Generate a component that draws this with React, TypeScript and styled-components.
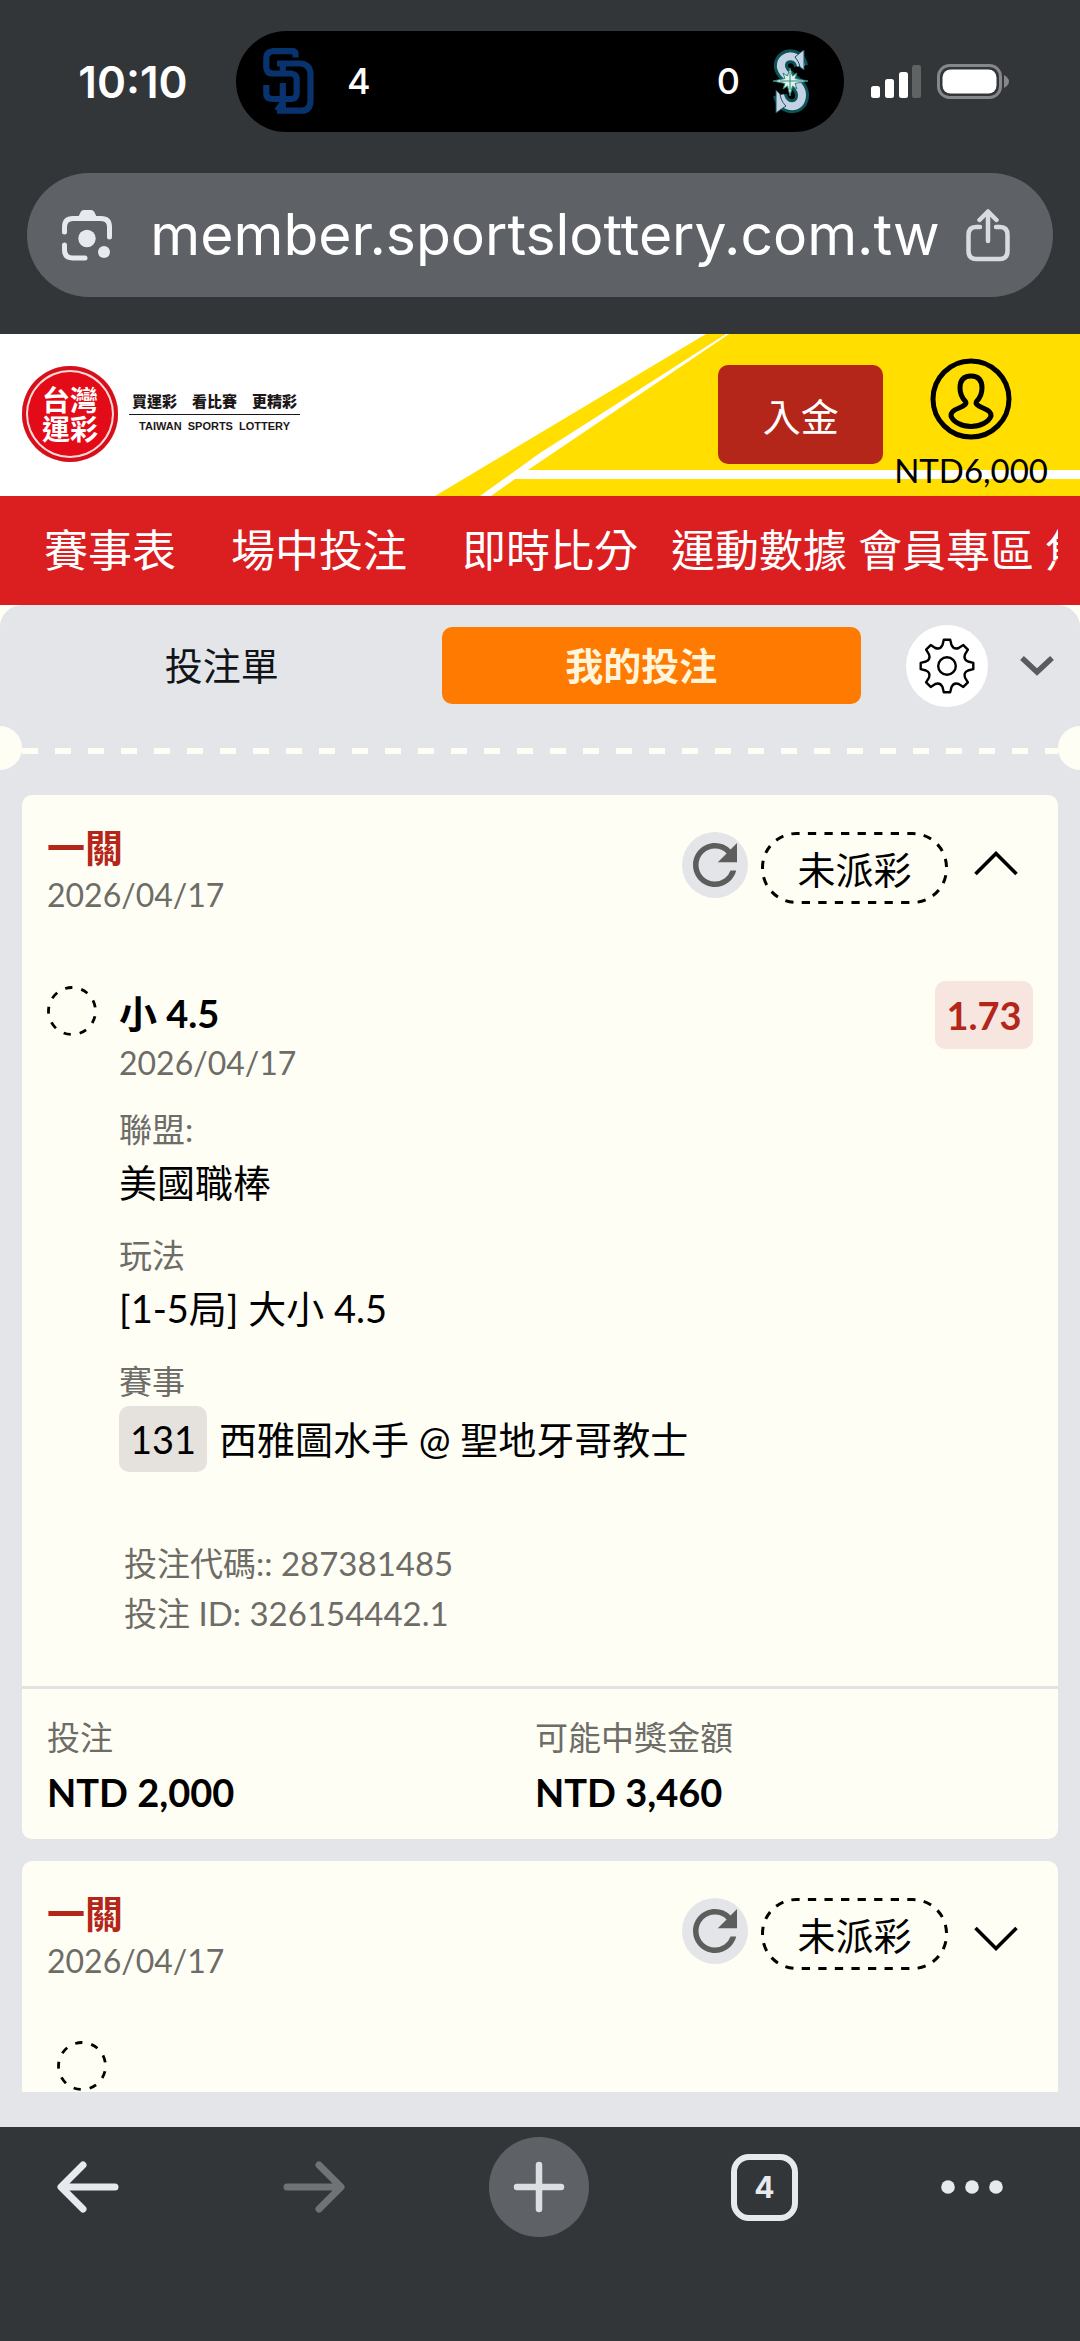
import React, { useState } from 'react';
import styled, { createGlobalStyle } from 'styled-components';
import { MdRefresh } from 'react-icons/md';

const chromeFont = '"Inter", "Roboto", "Liberation Sans", sans-serif';
const siteFont = '"Lato", "Noto Sans CJK TC", "Noto Sans", sans-serif';
const cjkFont = '"Noto Sans CJK TC", "Lato", sans-serif';

const color = {
  chrome: '#333639',
  field: '#5e6266',
  icon: '#e6e9ed',
  red: '#db1e20',
  brick: '#b5261a',
  yellow: '#ffde00',
  orange: '#ff7a00',
  panel: '#e4e5e8',
  cream: '#fffef5',
  muted: '#6d6c67',
};

const GlobalStyle = createGlobalStyle`
  *, *::before, *::after { box-sizing: border-box; }
  body { margin: 0; background: ${color.chrome}; font-family: ${siteFont}; color: #000; }
  button, input { font: inherit; color: inherit; border: 0; padding: 0; background: none; }
  button { cursor: pointer; }
  a { color: inherit; text-decoration: none; }
  svg { display: block; flex: none; }
  p, h1, h2, dl, dd, dt, ul { margin: 0; padding: 0; }
`;

const Shell = styled.div`
  display: flex;
  flex-direction: column;
  height: 100vh;
  overflow: hidden;
`;

/* ---------- browser chrome ---------- */

const BrowserTop = styled.header`
  flex: none;
  padding: 31px 0 37px;
  background: ${color.chrome};
  color: #fff;
  font-family: ${chromeFont};
`;

const StatusBar = styled.div`
  display: grid;
  grid-template-columns: 1fr minmax(0, 608px) 1fr;
  align-items: center;
`;

const Clock = styled.time`
  padding-left: 30px;
  text-align: center;
  font-size: 44px;
  line-height: 52px;
  font-weight: 600;
`;

const Island = styled.div`
  display: flex;
  align-items: center;
  justify-content: space-between;
  height: 101px;
  padding: 0 34px 0 27px;
  border-radius: 51px;
  background: #000;
`;

const TeamScore = styled.div`
  display: flex;
  align-items: center;
  gap: 32px;
  font-size: 36px;
  line-height: 48px;
  font-weight: 500;

  span { padding-bottom: 2px; }
`;

const Indicators = styled.div`
  display: flex;
  align-items: center;
  gap: 15px;
  padding-left: 27px;
`;

const AddressBar = styled.div`
  display: flex;
  align-items: center;
  height: 124px;
  margin: 41px 27px 0;
  padding: 0 43px 0 35px;
  border-radius: 62px;
  background: ${color.field};
`;

const Address = styled.input`
  flex: 1;
  min-width: 0;
  height: 80px;
  padding-left: 12px;
  text-align: center;
  font-size: 57px;
  line-height: 80px;
  outline: none;
`;

const PlainButton = styled.button`
  display: flex;
  align-items: center;
  justify-content: center;
  flex: none;
`;

const Toolbar = styled.nav`
  display: flex;
  justify-content: space-between;
  align-items: flex-start;
  flex: none;
  height: 214px;
  padding: 10px 76px 0 38px;
  background: ${color.chrome};
  color: ${color.icon};
  font-family: ${chromeFont};
`;

const ToolButton = styled(PlainButton)<{ $narrow?: boolean; $filled?: boolean }>`
  width: ${(p) => (p.$narrow ? 64 : 100)}px;
  height: 100px;
  border-radius: 50px;
  background: ${(p) => (p.$filled ? color.field : 'transparent')};
  &:disabled { color: #707376; }
`;

const TabCount = styled.span`
  display: flex;
  align-items: center;
  justify-content: center;
  width: 67px;
  height: 67px;
  border: 6px solid ${color.icon};
  border-radius: 18px;
  font-size: 30px;
  line-height: 36px;
  font-weight: 700;
`;

/* ---------- site header ---------- */

const SiteHeader = styled.div`
  position: relative;
  display: flex;
  align-items: center;
  justify-content: space-between;
  flex: none;
  height: 162px;
  padding: 0 32px 0 22px;
  background: #fff;
  overflow: hidden;
`;

const HeaderArt = styled.svg`
  position: absolute;
  right: 0;
  top: 0;
`;

const Brand = styled.a`
  display: flex;
  align-items: center;
  gap: 11px;
  position: relative;
  margin-bottom: 2px;
`;

const Seal = styled.span`
  display: grid;
  place-content: center;
  width: 96px;
  height: 96px;
  border-radius: 50%;
  background: #e30b17;
  box-shadow: inset 0 0 0 4px #d5101b, inset 0 0 0 6px #ffd9d9;
  color: #fff;
  font-family: ${cjkFont};
  font-size: 28px;
  line-height: 29px;
  font-weight: 700;
  text-align: center;
`;

const Tagline = styled.span`
  display: flex;
  flex-direction: column;
  align-items: center;
  padding-bottom: 4px;
  color: #1c1717;
`;

const TaglineMain = styled.span`
  padding: 0 3px 2px;
  border-bottom: 1px solid #1c1717;
  font-family: ${cjkFont};
  font-size: 15px;
  line-height: 22px;
  font-weight: 900;
`;

const TaglineSub = styled.span`
  padding-top: 3px;
  font-family: "Liberation Sans", sans-serif;
  font-size: 11px;
  line-height: 16px;
  font-weight: 700;
  white-space: pre;
`;

const HeaderActions = styled.div`
  position: relative;
  display: flex;
  align-self: flex-start;
  align-items: flex-start;
  gap: 11px;
  padding-top: 24px;
`;

const DepositButton = styled.button`
  width: 165px;
  height: 99px;
  margin-top: 7px;
  border-radius: 10px;
  background: ${color.brick};
  color: #fff;
  font-family: ${cjkFont};
  font-size: 38px;
  line-height: 56px;
`;

const Account = styled.a`
  display: flex;
  flex-direction: column;
  align-items: center;
  gap: 8px;
  font-size: 33px;
  line-height: 44px;
`;

const SiteNav = styled.nav`
  flex: none;
  height: 109px;
  padding: 0 22px 0 44px;
  background: ${color.red};
  color: #fff;
`;

const NavList = styled.ul`
  display: flex;
  align-items: center;
  height: 109px;
  padding-bottom: 6px;
  overflow: hidden;
  list-style: none;
  font-family: ${cjkFont};
  font-size: 44px;
  line-height: 64px;
  white-space: nowrap;
`;

const NavItem = styled.li<{ $gap: number }>`
  flex: none;
  margin-right: ${(p) => p.$gap}px;
`;

/* ---------- bet slip ---------- */

const Slip = styled.main`
  display: flex;
  flex-direction: column;
  flex: 1;
  min-height: 0;
  padding-bottom: 35px;
  background: linear-gradient(${color.cream} 60px, ${color.panel} 60px);
`;

const SlipTop = styled.div`
  flex: none;
  padding-top: 19px;
  border-radius: 22px 22px 0 0;
  background: ${color.panel};
`;

const SlipTabs = styled.div`
  display: flex;
  align-items: center;
  height: 83px;
  padding: 0 26px 0 22px;
`;

const SlipTab = styled.button<{ $active: boolean }>`
  flex: 1;
  height: 77px;
  padding: 0 20px 3px 0;
  border-radius: 10px;
  font-family: ${cjkFont};
  font-size: 38px;
  line-height: 56px;
  font-weight: ${(p) => (p.$active ? 700 : 400)};
  background: ${(p) => (p.$active ? color.orange : 'transparent')};
  color: ${(p) => (p.$active ? '#fff4dc' : '#111418')};
`;

const SettingsButton = styled(PlainButton)`
  width: 82px;
  height: 82px;
  margin: 0 32px 0 45px;
  border-radius: 50%;
  background: #fff;
`;

const Perforation = styled.div`
  display: flex;
  align-items: center;
  justify-content: space-between;
  height: 44px;
  margin: 19px 0 25px;

  &::before, &::after {
    content: '';
    width: 22px;
    height: 44px;
    background: ${color.cream};
  }
  &::before { border-radius: 0 22px 22px 0; }
  &::after { border-radius: 22px 0 0 22px; }
`;

const Dashes = styled.div`
  flex: 1;
  height: 6px;
  margin-top: 6px;
  background: repeating-linear-gradient(90deg, ${color.cream} 0 16px, transparent 16px 33px);
`;

const BetList = styled.div`
  display: flex;
  flex-direction: column;
  gap: 22px;
  flex: 1;
  min-height: 0;
  padding: 0 22px;
  overflow: hidden;
`;

const Card = styled.article`
  flex: none;
  border-radius: 10px;
  background: ${color.cream};
`;

const CardHeader = styled.div`
  display: flex;
  justify-content: space-between;
  align-items: flex-start;
  padding: 26px 40px 0 25px;
`;

const CardTitle = styled.div`
  display: flex;
  flex-direction: column;
  gap: 2px;
`;

const BetKind = styled.h2`
  color: ${color.brick};
  font-family: ${cjkFont};
  font-size: 38px;
  line-height: 50px;
  font-weight: 700;
`;

const DateText = styled.p`
  color: ${color.muted};
  font-size: 32px;
  line-height: 44px;
`;

const CardControls = styled.div`
  display: flex;
  align-items: center;
  padding-top: 11px;
`;

const RefreshButton = styled(PlainButton)`
  width: 66px;
  height: 66px;
  margin: 0 13px 6px 0;
  border-radius: 50%;
  background: ${color.panel};
  color: #5d5d5d;
`;

const StatusPill = styled.span`
  position: relative;
  display: flex;
  align-items: center;
  justify-content: center;
  width: 187px;
  height: 72px;
  margin-right: 26px;
  font-family: ${cjkFont};
  font-size: 38px;
  line-height: 56px;

  svg { position: absolute; inset: 0; }
`;

const Selection = styled.section`
  display: grid;
  grid-template-columns: 72px 1fr auto;
  padding: 64px 25px 48px;
`;

const SelectionCollapsed = styled.section`
  padding: 58px 35px 40px;
`;

const PickMark = styled.span`
  padding-top: 5px;
`;

const Pick = styled.h2`
  padding-top: 4px;
  font-size: 38px;
  line-height: 56px;
  font-weight: 700;
`;

const Odds = styled.span`
  align-self: start;
  width: 98px;
  border-radius: 10px;
  background: #f7e6e0;
  color: ${color.brick};
  text-align: center;
  font-size: 38px;
  line-height: 68px;
  font-weight: 700;
`;

const Facts = styled.dl`
  display: flex;
  flex-direction: column;
  gap: 20px;
  margin-top: 19px;
`;

const Label = styled.dt`
  color: ${color.muted};
  font-size: 33px;
  line-height: 50px;
`;

const Value = styled.dd<{ $strong?: boolean }>`
  display: flex;
  align-items: center;
  gap: 12px;
  font-size: 38px;
  line-height: 56px;
  font-weight: ${(p) => (p.$strong ? 700 : 400)};
`;

const EventNo = styled.span`
  width: 88px;
  border-radius: 10px;
  background: #e5e2dd;
  text-align: center;
  line-height: 66px;
`;

const Codes = styled.div`
  margin-top: 66px;
  padding-left: 5px;
  color: ${color.muted};
  font-size: 33px;
  line-height: 50px;
`;

const Totals = styled.dl`
  display: grid;
  grid-template-columns: 1fr 1fr;
  padding: 23px 35px 19px 25px;
  border-top: 3px solid #e3e3df;
`;

const TotalCell = styled.div`
  display: flex;
  flex-direction: column;
  gap: 2px;
`;

/* ---------- drawings ---------- */

const PadresLogo = () => (
  <svg width="52" height="67" viewBox="0 0 52 67" fill="none" stroke="#08336f" strokeWidth="6.200" strokeLinejoin="round">
    <path d="M32.500 9.500 V6 Q32.500 3.200 29 3.200 H9.500 Q3.300 4 3.300 10 V20 Q4 25.500 9.500 25.500 H28 Q33.700 26.500 33.700 31 V45 Q33.500 51 28 51 H9 Q3.300 50.500 3.300 46 V37" />
    <path d="M14 15.500 H38 Q47.500 16.500 47.500 27 V53 Q47 62.500 39 62.700 H14 M19.800 15.500 V24 M19.800 35 V62.700 M14 62.700 L19 56" />
  </svg>
);

const MarinersLogo = () => (
  <svg width="38" height="67" viewBox="0 0 38 67" fill="none">
    {[
      ['#0d5355', 14],
      ['#c5d2e6', 8],
    ].map(([stroke, width]) => (
      <path
        key={stroke}
        stroke={stroke as string}
        strokeWidth={width as number}
        d="M29 18 C27 5 11 6 9 16 C7 29 30 33 30 47 C30 62 11 62 8 47"
      />
    ))}
    <path d="M29 4 L32 2 V22 L28 19 C27 14 25 12 23 9 Z M8 62 L4 65 V42 L8 46 C9 52 11 55 14 58 Z" fill="#c5d2e6" stroke="#0d5355" strokeWidth="1" />
    <path d="M18 20 L20.500 28 L25 25 L23 30.500 L36 33 L23 35.500 L25 41 L20.500 38 L18 48 L15.500 38 L11 41 L13 35.500 L1 33 L13 30.500 L11 25 L15.500 28 Z" fill="#dff3ea" stroke="#2c8780" strokeWidth="1" />
    <path d="M18 24 V42 M8 33 H30" stroke="#2c8780" strokeWidth="1" />
  </svg>
);

const Signal = () => (
  <svg width="51" height="33" viewBox="0 0 51 33" fill="#fff">
    <rect x="0" y="21" width="9" height="12" rx="2.500" />
    <rect x="14" y="14" width="9" height="19" rx="2.500" />
    <rect x="28" y="7" width="9" height="26" rx="2.500" />
    <rect x="41" y="0" width="9" height="33" rx="2.500" fill="#606264" />
  </svg>
);

const Battery = () => (
  <svg width="73" height="35" viewBox="0 0 73 35">
    <rect x="1.500" y="1.500" width="62" height="32" rx="11" fill="none" stroke="#85878a" strokeWidth="3" />
    <rect x="5.500" y="5.500" width="54" height="24" rx="8" fill="#fff" />
    <path d="M67 11 Q72 14 72 17.500 T67 24 Z" fill="#85878a" />
  </svg>
);

const LensIcon = () => (
  <svg width="50" height="51" viewBox="0 0 50 51" fill="none" stroke={color.icon} strokeWidth="5" strokeLinecap="round">
    <path d="M2.500 22 V17 Q2.500 8.500 11 8.500 H39 Q47.500 8.500 47.500 17 V27" />
    <path d="M2.500 35 V40 Q2.500 48 11 48 H23" />
    <path d="M14 8 Q17 7 18 3.500 Q19 0 22 0 H29 Q32 0 33 3.500 Q34 7 37 8 Z" fill={color.icon} stroke="none" />
    <circle cx="25" cy="28.500" r="8.700" fill={color.icon} stroke="none" />
    <circle cx="42" cy="42" r="6" fill={color.icon} stroke="none" />
  </svg>
);

const ShareIcon = () => (
  <svg width="44" height="53" viewBox="0 0 44 53" fill="none" stroke="#d9dbdf" strokeWidth="4.500" strokeLinecap="round" strokeLinejoin="round">
    <path d="M14 18 H10 Q2.500 18 2.500 26 V42 Q2.500 50 10 50 H34 Q41.500 50 41.500 42 V26 Q41.500 18 34 18 H30" />
    <path d="M22 32 V3 M13.500 11 L22 2.500 L30.500 11" />
  </svg>
);

const YellowTrack = () => (
  <HeaderArt width="645" height="162" viewBox="435 334 645 162" fill={color.yellow} aria-hidden="true">
    <path d="M435 496 L706 334 H726 L540 453 L480 496 Z" />
    <path d="M528 470 L729 334 H1080 V470 Z" />
    <path d="M491 496 L515 479 H1080 V496 Z" />
  </HeaderArt>
);

const UserIcon = () => (
  <svg width="82" height="82" viewBox="0 0 82 82" fill="none" stroke="#000" strokeWidth="5" strokeLinejoin="round">
    <circle cx="41" cy="41" r="38" />
    <path d="M41 18 C33 18 30 23 30 30 C30 37 32 40 35.500 43.500 C37 46 34 48 29 50 C23 52.500 21 54 21 58 C23 64 32 68.500 41 68.500 C50 68.500 59 64 61 58 C61 54 59 52.500 53 50 C48 48 45 46 46.500 43.500 C50 40 52 37 52 30 C52 23 49 18 41 18 Z" />
  </svg>
);

const gearPath = (() => {
  const pt = (r: number, deg: number) => {
    const a = ((deg - 90) * Math.PI) / 180;
    return `${(28 + r * Math.cos(a)).toFixed(1)} ${(28 + r * Math.sin(a)).toFixed(1)}`;
  };
  let d = '';
  for (let k = 0; k < 8; k += 1) {
    const c = k * 45;
    d += `${k === 0 ? 'M' : 'L'}${pt(26.5, c - 7)} L${pt(26.5, c + 7)} L${pt(21.5, c + 12)} Q${pt(17.5, c + 22.5)} ${pt(21.5, c + 33)} `;
  }
  return `${d}Z`;
})();

const GearIcon = () => (
  <svg width="56" height="56" viewBox="0 0 56 56" fill="none" stroke="#000" strokeWidth="2.400" strokeLinejoin="round">
    <path d={gearPath} />
    <circle cx="28" cy="28" r="8.800" />
  </svg>
);

const SmallChevron = () => (
  <svg width="34" height="20" viewBox="0 0 34 20" fill="none" stroke="#595b5d" strokeWidth="5.500">
    <path d="M2 2 L17 16 L32 2" />
  </svg>
);

const Chevron = ({ up }: { up: boolean }) => (
  <svg width="44" height="34" viewBox="0 0 44 34" fill="none" stroke="#000" strokeWidth="3.600">
    <path d={up ? 'M1.500 23 L22 2.500 L42.500 23' : 'M1.500 11 L22 31.500 L42.500 11'} />
  </svg>
);

const DashedCircle = () => (
  <svg width="50" height="50" viewBox="0 0 50 50" fill="none" stroke="#000" strokeWidth="2.800">
    <circle cx="25" cy="25" r="23.500" pathLength="162" strokeDasharray="8 10" strokeDashoffset="4" transform="rotate(-178 25 25)" />
  </svg>
);

const PillOutline = () => (
  <svg width="187" height="72" viewBox="0 0 187 72" fill="none" stroke="#000" strokeWidth="3" aria-hidden="true">
    <rect x="1.500" y="1.500" width="184" height="69" rx="34" pathLength="432" strokeDasharray="8 8" strokeDashoffset="5" />
  </svg>
);

const BackArrow = ({ flip }: { flip?: boolean }) => (
  <svg width="62" height="52" viewBox="0 0 62 52" fill="none" stroke="currentColor" strokeWidth="7" strokeLinecap="round" strokeLinejoin="round">
    <path d={flip ? 'M4 26 H57 M36 4 L58 26 L36 48' : 'M58 26 H5 M26 4 L4 26 L26 48'} />
  </svg>
);

const PlusIcon = () => (
  <svg width="52" height="52" viewBox="0 0 52 52" stroke="#dcdfe2" strokeWidth="6.500" strokeLinecap="round">
    <path d="M26 4 V48 M4 26 H48" />
  </svg>
);

const DotsIcon = () => (
  <svg width="62" height="14" viewBox="0 0 62 14" fill="currentColor">
    <circle cx="7" cy="7" r="6.800" />
    <circle cx="31" cy="7" r="6.800" />
    <circle cx="55" cy="7" r="6.800" />
  </svg>
);

/* ---------- page ---------- */

const navItems = [
  { text: '賽事表', gap: 55 },
  { text: '場中投注', gap: 55 },
  { text: '即時比分', gap: 33 },
  { text: '運動數據', gap: 11 },
  { text: '會員專區', gap: 11 },
  { text: '焦點賽事', gap: 0 },
];

const BetHeader = ({ open, onToggle }: { open: boolean; onToggle?: () => void }) => (
  <CardHeader>
    <CardTitle>
      <BetKind>一關</BetKind>
      <DateText>2026/04/17</DateText>
    </CardTitle>
    <CardControls>
      <RefreshButton aria-label="重新整理">
        <MdRefresh size={66} />
      </RefreshButton>
      <StatusPill>
        <PillOutline />
        未派彩
      </StatusPill>
      <PlainButton aria-label={open ? '收合' : '展開'} aria-expanded={open} onClick={onToggle}>
        <Chevron up={open} />
      </PlainButton>
    </CardControls>
  </CardHeader>
);

export default function App() {
  const [tab, setTab] = useState('mine');

  return (
    <>
      <GlobalStyle />
      <Shell>
        <BrowserTop>
          <StatusBar>
            <Clock>10:10</Clock>
            <Island>
              <TeamScore>
                <PadresLogo />
                <span>4</span>
              </TeamScore>
              <TeamScore>
                <span>0</span>
                <MarinersLogo />
              </TeamScore>
            </Island>
            <Indicators>
              <Signal />
              <Battery />
            </Indicators>
          </StatusBar>
          <AddressBar>
            <PlainButton aria-label="智慧鏡頭">
              <LensIcon />
            </PlainButton>
            <Address aria-label="網址" type="text" defaultValue="member.sportslottery.com.tw" />
            <PlainButton aria-label="分享">
              <ShareIcon />
            </PlainButton>
          </AddressBar>
        </BrowserTop>

        <SiteHeader>
          <YellowTrack />
          <Brand href="#home">
            <Seal>
              <span>台灣</span>
              <span>運彩</span>
            </Seal>
            <Tagline>
              <TaglineMain>買運彩　看比賽　更精彩</TaglineMain>
              <TaglineSub>TAIWAN  SPORTS  LOTTERY</TaglineSub>
            </Tagline>
          </Brand>
          <HeaderActions>
            <DepositButton>入金</DepositButton>
            <Account href="#account">
              <UserIcon />
              <span>NTD6,000</span>
            </Account>
          </HeaderActions>
        </SiteHeader>

        <SiteNav>
          <NavList>
            {navItems.map((item) => (
              <NavItem key={item.text} $gap={item.gap}>
                <a href="#nav">{item.text}</a>
              </NavItem>
            ))}
          </NavList>
        </SiteNav>

        <Slip>
          <SlipTop>
            <SlipTabs>
              <SlipTab $active={tab === 'slip'} onClick={() => setTab('slip')}>
                投注單
              </SlipTab>
              <SlipTab $active={tab === 'mine'} onClick={() => setTab('mine')}>
                我的投注
              </SlipTab>
              <SettingsButton aria-label="設定">
                <GearIcon />
              </SettingsButton>
              <PlainButton aria-label="收合投注單">
                <SmallChevron />
              </PlainButton>
            </SlipTabs>
            <Perforation>
              <Dashes />
            </Perforation>
          </SlipTop>

          <BetList>
            <Card>
              <BetHeader open />
              <Selection>
                <PickMark>
                  <DashedCircle />
                </PickMark>
                <div>
                  <Pick>小 4.5</Pick>
                  <DateText>2026/04/17</DateText>
                  <Facts>
                    <div>
                      <Label>聯盟:</Label>
                      <Value>美國職棒</Value>
                    </div>
                    <div>
                      <Label>玩法</Label>
                      <Value>[1-5局] 大小 4.5</Value>
                    </div>
                    <div>
                      <Label>賽事</Label>
                      <Value>
                        <EventNo>131</EventNo>
                        <span>西雅圖水手 @ 聖地牙哥教士</span>
                      </Value>
                    </div>
                  </Facts>
                  <Codes>
                    <p>投注代碼:: 287381485</p>
                    <p>投注 ID: 326154442.1</p>
                  </Codes>
                </div>
                <Odds>1.73</Odds>
              </Selection>
              <Totals>
                <TotalCell>
                  <Label>投注</Label>
                  <Value $strong>NTD 2,000</Value>
                </TotalCell>
                <TotalCell>
                  <Label>可能中獎金額</Label>
                  <Value $strong>NTD 3,460</Value>
                </TotalCell>
              </Totals>
            </Card>

            <Card>
              <BetHeader open={false} />
              <SelectionCollapsed>
                <DashedCircle />
              </SelectionCollapsed>
            </Card>
          </BetList>
        </Slip>

        <Toolbar aria-label="瀏覽器">
          <ToolButton aria-label="上一頁">
            <BackArrow />
          </ToolButton>
          <ToolButton aria-label="下一頁" disabled>
            <BackArrow flip />
          </ToolButton>
          <ToolButton aria-label="新分頁" $filled>
            <PlusIcon />
          </ToolButton>
          <ToolButton aria-label="分頁">
            <TabCount>4</TabCount>
          </ToolButton>
          <ToolButton aria-label="更多" $narrow>
            <DotsIcon />
          </ToolButton>
        </Toolbar>
      </Shell>
    </>
  );
}
